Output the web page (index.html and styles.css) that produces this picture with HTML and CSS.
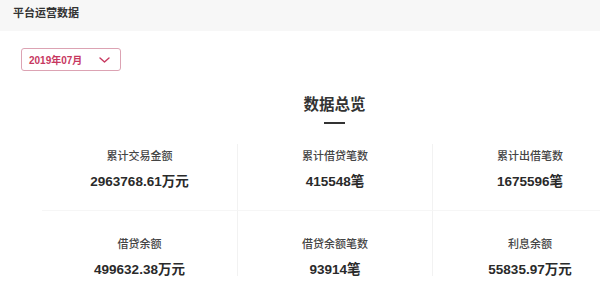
FILE: index.html
```html
<!DOCTYPE html>
<html>
<head>
    <title>平台运营数据</title>
    <link rel="stylesheet" href="styles.css">
</head>
<body>
    <!-- 顶部标题栏 -->
    <div class="topbar">平台运营数据</div>

    <!-- 月份选择 -->
    <div class="picker">
        <span class="picker-text">2019年07月</span>
        <svg class="chevron" width="11" height="6" viewBox="0 0 11 6">
            <path d="M1 1 L5.5 5 L10 1" fill="none" stroke="#c7385f" stroke-width="1.4" stroke-linecap="round" stroke-linejoin="round"/>
        </svg>
    </div>

    <!-- 数据总览 -->
    <div class="overview">
        <h2 class="title">数据总览</h2>
        <div class="title-bar"></div>

        <div class="stats">
            <div class="cell top">
                <div class="label">累计交易金额</div>
                <div class="value">2963768.61万元</div>
            </div>
            <div class="cell top">
                <div class="label">累计借贷笔数</div>
                <div class="value">415548笔</div>
            </div>
            <div class="cell top">
                <div class="label">累计出借笔数</div>
                <div class="value">1675596笔</div>
            </div>
            <div class="cell bottom">
                <div class="label">借贷余额</div>
                <div class="value">499632.38万元</div>
            </div>
            <div class="cell bottom">
                <div class="label">借贷余额笔数</div>
                <div class="value">93914笔</div>
            </div>
            <div class="cell bottom">
                <div class="label">利息余额</div>
                <div class="value">55835.97万元</div>
            </div>
        </div>
    </div>
</body>
</html>
```

FILE: styles.css
```css
body {
    margin: 0;
    font-family: "Liberation Sans", "Noto Sans CJK SC", sans-serif;
    color: #333;
    background: #fff;
    overflow: hidden;
}
.topbar {
    height: 31px;
    line-height: 27px;
    padding-left: 13px;
    background-color: #f7f7f7;
    font-size: 11px;
    font-weight: bold;
    color: #333;
}
.picker {
    display: flex;
    align-items: center;
    justify-content: space-between;
    box-sizing: border-box;
    width: 100px;
    height: 23px;
    margin: 17px 0 0 21px;
    padding: 0 10px 0 7px;
    border: 1px solid #dca3b3;
    border-radius: 3px;
}
.picker-text { font-size: 10px; font-weight: bold; color: #c7385f; }
.chevron { display: block; }
.overview {
    width: 585px;
    margin-left: 42px;
    display: flex;
    flex-direction: column;
    align-items: center;
}
.title {
    margin: 26px 0 0 0;
    font-size: 15.5px;
    line-height: 16px;
    font-weight: bold;
    color: #333;
}
.title-bar {
    width: 21px;
    height: 2px;
    margin-top: 9px;
    background-color: #333;
}
.stats {
    width: 100%;
    margin-top: 20px;
    display: grid;
    grid-template-columns: repeat(3, 1fr);
}
.cell {
    display: flex;
    flex-direction: column;
    align-items: center;
    border-left: 1px solid #f2f2f2;
}
.cell:nth-child(3n+1) { border-left: none; }
.cell.top {
    padding: 4px 0 18px 0;
    border-bottom: 1px solid #f6f6f6;
}
.cell.bottom {
    height: 65px;
    box-sizing: border-box;
    padding-top: 25px;
}
.label {
    font-size: 11px;
    line-height: 16px;
    font-weight: 500;
    color: #444;
}
.value {
    margin-top: 8px;
    font-size: 13.5px;
    line-height: 20px;
    font-weight: bold;
    color: #2a2a2a;
    white-space: nowrap;
}
```
